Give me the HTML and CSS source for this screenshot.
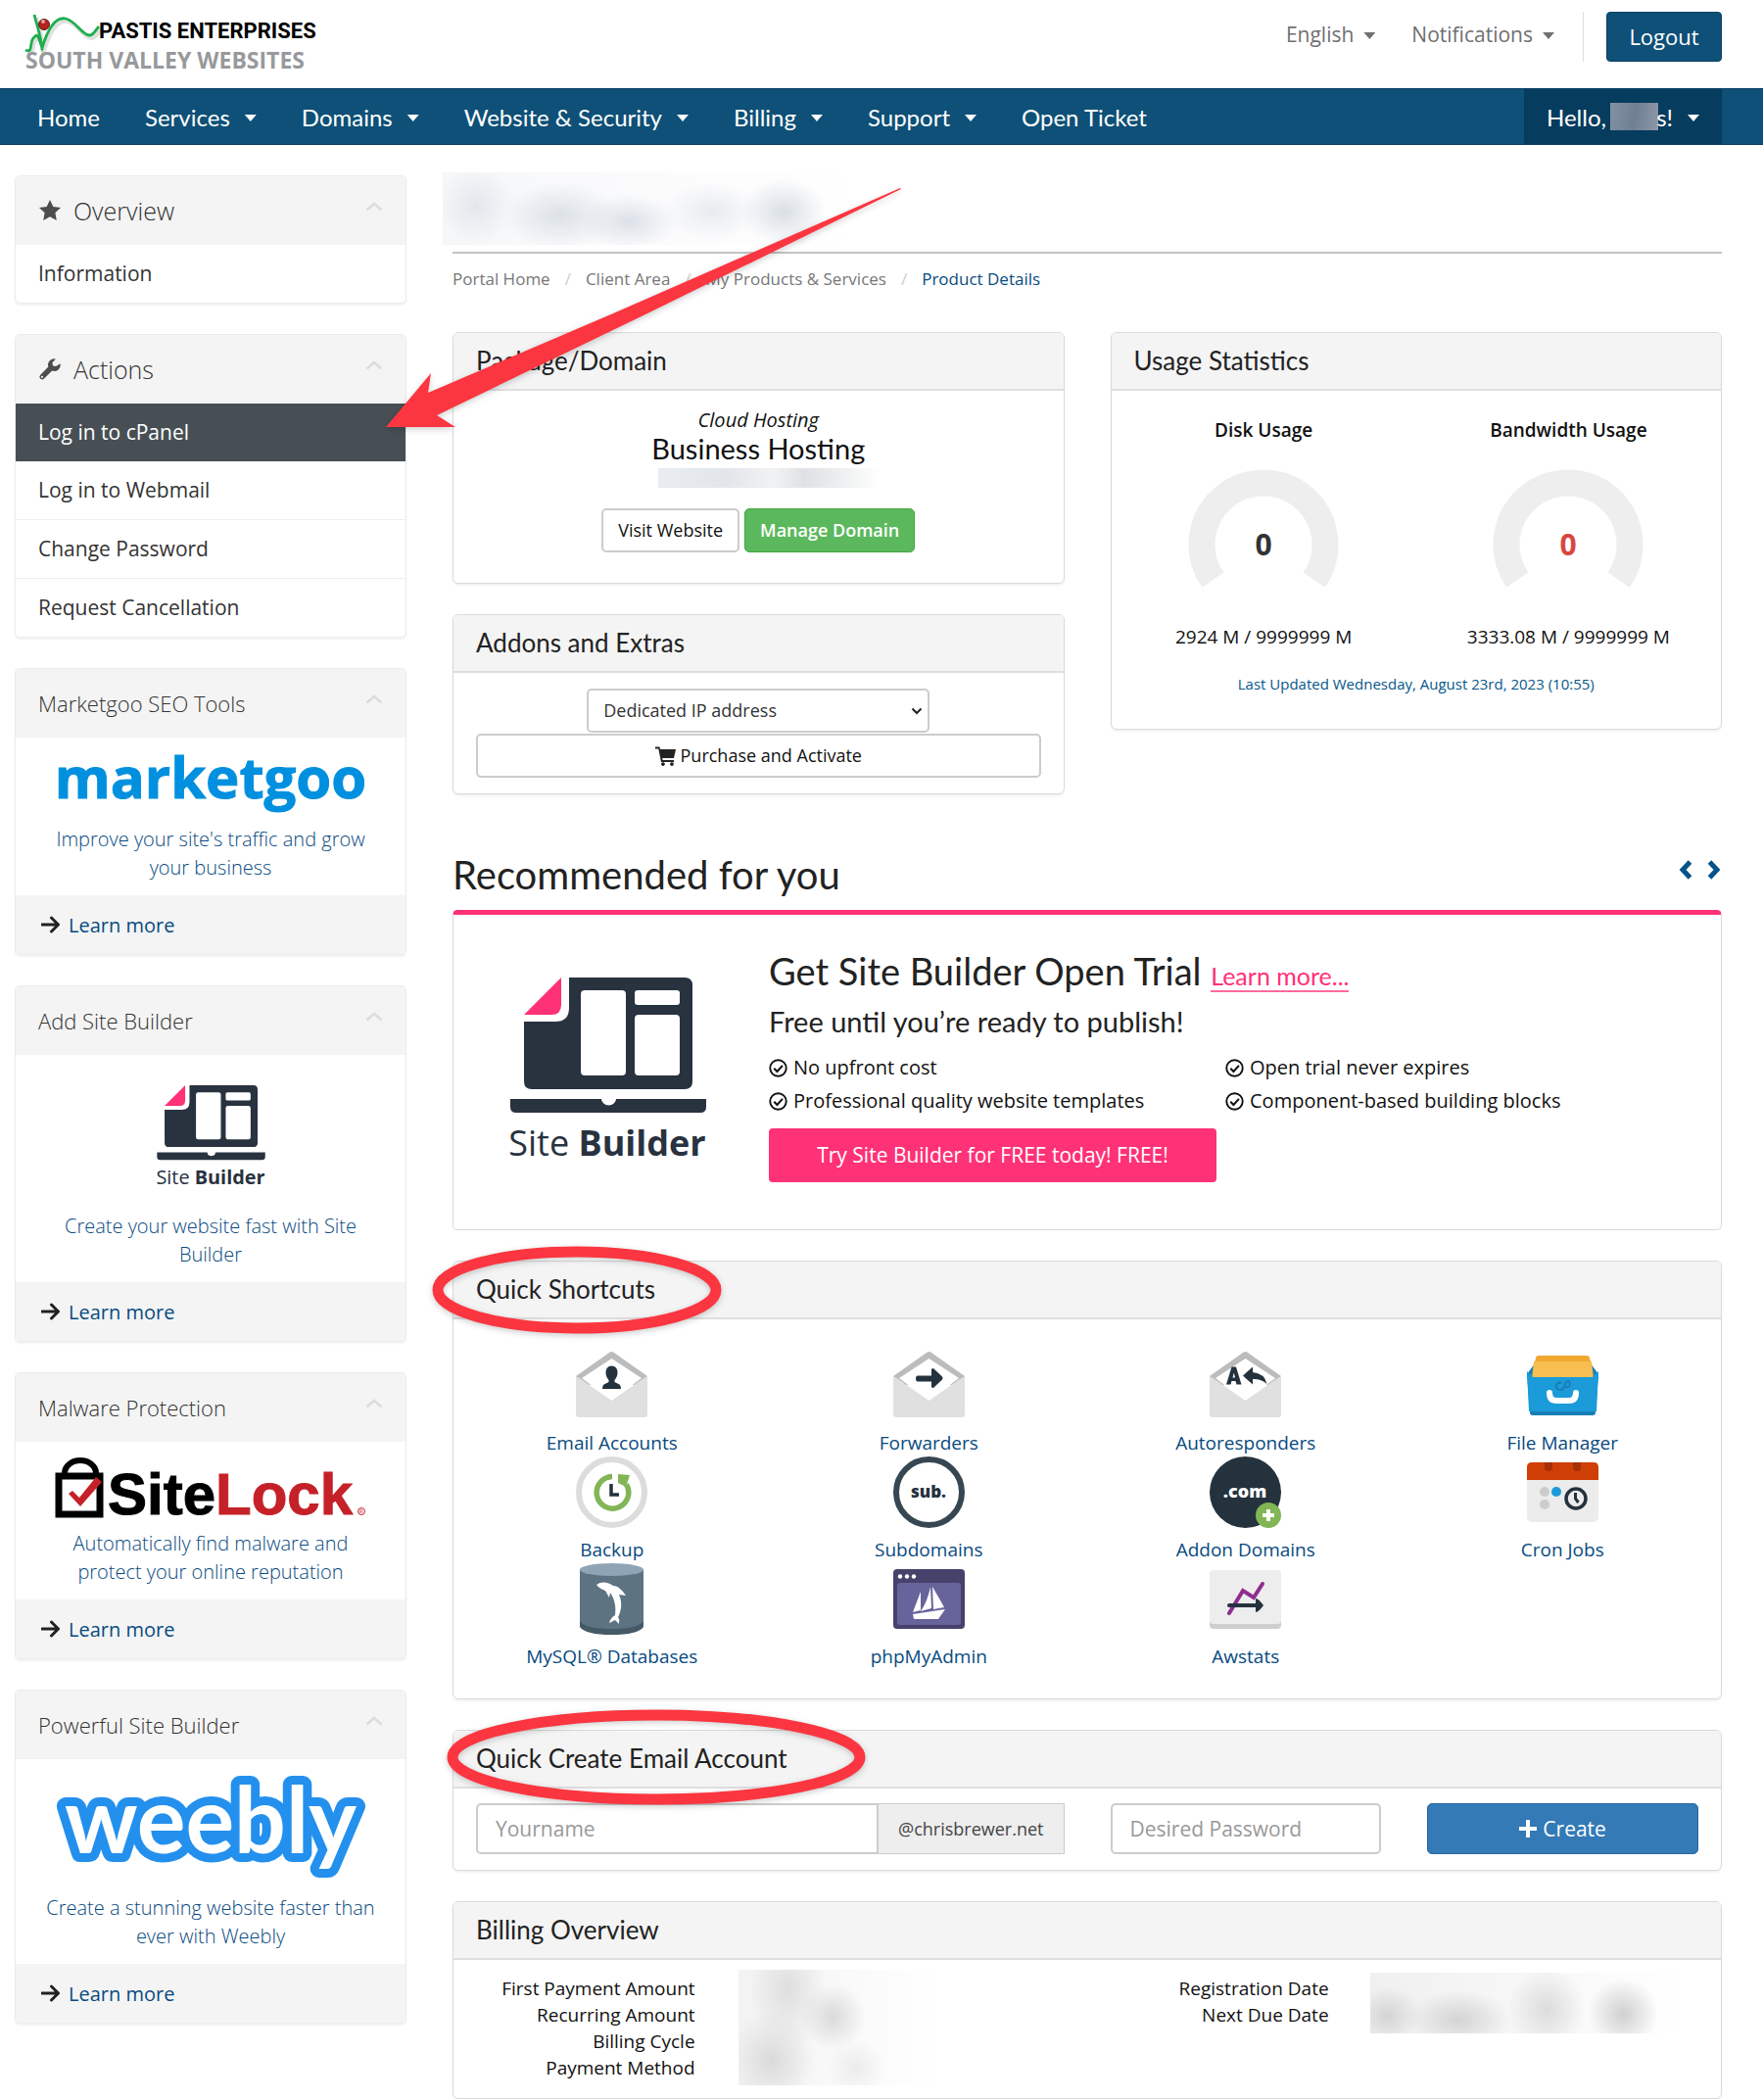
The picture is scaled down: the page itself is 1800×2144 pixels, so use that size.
FILE: index.html
```html
<!DOCTYPE html>
<html lang="en">
<head>
<meta charset="utf-8">
<title>Product Details - South Valley Websites</title>
<meta name="viewport" content="width=device-width, initial-scale=1">
<link rel="stylesheet" href="styles.css">
</head>
<body>
<svg class="defs" aria-hidden="true">
  <symbol id="chev-up" viewBox="0 0 18 10"><path d="M1.500 8.500 9 2l7.500 6.500" fill="none" stroke="#dcdcdc" stroke-width="2.500"/></symbol>
  <symbol id="arrow" viewBox="0 0 20 18"><path d="M1 9h16M10.500 2l7 7-7 7" fill="none" stroke="#222" stroke-width="3" stroke-linecap="round" stroke-linejoin="round"/></symbol>
  <symbol id="tick" viewBox="0 0 18 18"><circle cx="9" cy="9" r="7.800" fill="none" stroke="#111" stroke-width="1.800"/><path d="M5 9.200l3 3 5.200-5.700" fill="none" stroke="#111" stroke-width="2"/></symbol>
  <symbol id="envelope" viewBox="0 0 73 73">
    <path d="M0 31V27L34 3q2.500-2 5 0L73 27v4l-8 5H8z" fill="#bcbcbc"/>
    <path d="M36.500 9 67 29 36.500 52 6 29z" fill="#fff"/>
    <path d="M0 27l5 3 31.500 22L68 30l5-3v39q0 3-3 3H3q-3 0-3-3z" fill="#e0e0e0"/>
  </symbol>
  <symbol id="laptop" viewBox="0 0 210 192">
    <path d="M66 2h118q8 0 8 8v98q0 8-8 8H28q-8 0-8-8V47h32q14 0 14-14z" fill="#29323f"/>
    <path d="M20 40 58 2v28q0 10-10 10z" fill="#ff3177"/>
    <rect x="78" y="15" width="46" height="87" rx="4" fill="#fff"/>
    <rect x="133" y="15" width="46" height="15" rx="3" fill="#fff"/>
    <rect x="133" y="40" width="46" height="62" rx="4" fill="#fff"/>
    <path d="M6 126h93a7.500 6.500 0 0 0 15 0h92v8q0 6-6 6H12q-6 0-6-6z" fill="#29323f"/>
  </symbol>
</svg>

<header class="top">
  <a class="brand" href="#" aria-label="Pastis Enterprises South Valley Websites">
    <svg class="brand-svg" viewBox="0 0 300 74">
      <path d="M10 6C13 18 17 28 18 42M1 42c8 4 4-8 8-12s4-6 9 10C24 20 32 8 42 10s16 16 24 17c5 0 6-5 10-9" transform="translate(2 4)" fill="none" stroke="#999" stroke-width="4" opacity=".3"/>
      <path d="M10 6C13 18 17 28 18 42M1 42c8 4 4-8 8-12s4-6 9 10C24 20 32 8 42 10s16 16 24 17c5 0 6-5 10-9" transform="translate(0 1)" fill="none" stroke="#1fae4f" stroke-width="2.800"/>
      <circle cx="20" cy="17" r="5.500" fill="#b5221f" stroke="#5a2420"/>
      <circle cx="19" cy="14" r="2" fill="#e9a09b"/>
      <text class="brand-one" x="76" y="31">PASTIS ENTERPRISES</text>
      <text class="brand-two" x="1" y="62">SOUTH VALLEY WEBSITES</text>
    </svg>
  </a>
  <div class="top-links">
    <a href="#">English<span class="caret"></span></a>
    <a href="#">Notifications<span class="caret"></span></a>
    <div class="logout-box"><button class="logout" type="button">Logout</button></div>
  </div>
</header>

<nav class="nav">
  <a href="#">Home</a>
  <a href="#">Services<span class="caret"></span></a>
  <a href="#">Domains<span class="caret"></span></a>
  <a href="#">Website &amp; Security<span class="caret"></span></a>
  <a href="#">Billing<span class="caret"></span></a>
  <a href="#">Support<span class="caret"></span></a>
  <a href="#">Open Ticket</a>
  <a class="account" href="#">Hello, <span class="redact-name"></span>s!<span class="caret"></span></a>
</nav>

<div class="page">
  <aside class="side">
    <section class="card">
      <h3 class="card-head big"><svg class="head-icon" viewBox="0 0 24 24"><path d="M12 1l3.300 7 7.700 1-5.600 5.300 1.400 7.700L12 18.300 5.200 22l1.400-7.700L1 9l7.700-1z" fill="#4d4d4d"/></svg>Overview<svg class="chev"><use href="#chev-up"/></svg></h3>
      <a class="item" href="#">Information</a>
    </section>
    <section class="card">
      <h3 class="card-head big"><svg class="head-icon" viewBox="0 0 24 24"><path d="M22.500 6.300a6.300 6.300 0 0 1-8.300 7.300l-8.400 8.200a2.700 2.700 0 0 1-3.800-3.800l8.300-8.400a6.300 6.300 0 0 1 7.600-8l-3.500 3.600.6 3.200 3.200.6z" fill="#4d4d4d"/><circle cx="4" cy="19.800" r="1.100" fill="#f4f4f4"/></svg>Actions<svg class="chev"><use href="#chev-up"/></svg></h3>
      <a class="item active" href="#">Log in to cPanel</a>
      <a class="item" href="#">Log in to Webmail</a>
      <a class="item" href="#">Change Password</a>
      <a class="item" href="#">Request Cancellation</a>
    </section>
    <section class="card">
      <h3 class="card-head">Marketgoo SEO Tools<svg class="chev"><use href="#chev-up"/></svg></h3>
      <a class="promo" href="#"><svg class="logo-short" viewBox="8 0 344 62" role="img" aria-label="marketgoo"><text class="mg-text" x="180" y="46" text-anchor="middle">marketgoo</text></svg>Improve your site's traffic and grow your business</a>
      <div class="card-foot"><svg class="arrow"><use href="#arrow"/></svg><a href="#">Learn more</a></div>
    </section>
    <section class="card">
      <h3 class="card-head">Add Site Builder<svg class="chev"><use href="#chev-up"/></svg></h3>
      <a class="promo" href="#"><svg class="logo-sb" viewBox="0 0 210 192"><use href="#laptop" width="210" height="192"/><text class="sb-text" x="105" y="184" text-anchor="middle">Site <tspan class="sb-strong">Builder</tspan></text></svg>Create your website fast with Site Builder</a>
      <div class="card-foot"><svg class="arrow"><use href="#arrow"/></svg><a href="#">Learn more</a></div>
    </section>
    <section class="card">
      <h3 class="card-head">Malware Protection<svg class="chev"><use href="#chev-up"/></svg></h3>
      <a class="promo" href="#"><svg class="logo-short" viewBox="8 0 344 62">
        <path d="M31 18v-2a16 13 0 0 1 32 0v2" fill="none" stroke="#000" stroke-width="6"/>
        <rect x="25" y="19" width="42" height="39" fill="#fff" stroke="#000" stroke-width="7"/>
        <path d="M35 37l4-3 7 7 17-21 6 5-22 25z" fill="#c52128"/>
        <text class="sl-text" x="75" y="58">Site<tspan class="sl-red">Lock</tspan></text>
        <circle cx="334" cy="55" r="3.500" fill="none" stroke="#c52128"/><text class="sl-reg" x="332" y="57">R</text>
      </svg>Automatically find malware and protect your online reputation</a>
      <div class="card-foot"><svg class="arrow"><use href="#arrow"/></svg><a href="#">Learn more</a></div>
    </section>
    <section class="card">
      <h3 class="card-head">Powerful Site Builder<svg class="chev"><use href="#chev-up"/></svg></h3>
      <a class="promo" href="#"><svg class="logo-tall" viewBox="8 0 344 110"><text class="wb-text" x="180" y="80" text-anchor="middle">weebly</text></svg>Create a stunning website faster than ever with Weebly</a>
      <div class="card-foot"><svg class="arrow"><use href="#arrow"/></svg><a href="#">Learn more</a></div>
    </section>
  </aside>

  <main class="main">
    <div class="title"><div class="redact-title"></div></div>
    <ol class="crumbs">
      <li><a href="#">Portal Home</a></li>
      <li><a href="#">Client Area</a></li>
      <li><a href="#">My Products &amp; Services</a></li>
      <li class="current">Product Details</li>
    </ol>

    <div class="two">
      <div class="stack">
        <section class="panel">
          <h3 class="panel-head">Package/Domain</h3>
          <div class="package">
            <em>Cloud Hosting</em>
            <h4>Business Hosting</h4>
            <div class="redact-domain"></div>
            <div class="buttons">
              <button class="btn" type="button">Visit Website</button>
              <button class="btn green" type="button">Manage Domain</button>
            </div>
          </div>
        </section>
        <section class="panel">
          <h3 class="panel-head">Addons and Extras</h3>
          <form class="addons">
            <div class="select-wrap">
              <select class="select" aria-label="Addon"><option>Dedicated IP address</option></select>
              <svg class="select-chev" viewBox="0 0 12 8"><path d="M1.500 1.500 6 6l4.500-4.500" fill="none" stroke="#222" stroke-width="2"/></svg>
            </div>
            <button class="btn wide" type="button"><svg class="cart" viewBox="0 0 22 20"><path d="M0 .5h4.500l.6 2.500H21l-2 9H7.200l.4 2H19v2H6L3.300 2.500H0zM8 16.200a1.900 1.900 0 1 1-.1 0zM17 16.200a1.900 1.900 0 1 1-.1 0z" fill="#222"/></svg>Purchase and Activate</button>
          </form>
        </section>
      </div>
      <section class="panel usage">
        <h3 class="panel-head">Usage Statistics</h3>
        <div class="usage-body">
          <div class="meters">
            <div class="meter">
              <strong>Disk Usage</strong>
              <svg class="gauge" viewBox="0 0 154 154"><path d="M25.400 113.100A63 63 0 1 1 128.600 113.100" fill="none" stroke="#eee" stroke-width="27"/><text class="gauge-num" x="77" y="88" text-anchor="middle">0</text></svg>
              <span>2924 M / 9999999 M</span>
            </div>
            <div class="meter">
              <strong>Bandwidth Usage</strong>
              <svg class="gauge" viewBox="0 0 154 154"><path d="M25.400 113.100A63 63 0 1 1 128.600 113.100" fill="none" stroke="#eee" stroke-width="27"/><text class="gauge-num red" x="77" y="88" text-anchor="middle">0</text></svg>
              <span>3333.08 M / 9999999 M</span>
            </div>
          </div>
          <p class="updated">Last Updated Wednesday, August 23rd, 2023 (10:55)</p>
        </div>
      </section>
    </div>

    <div class="rec-head">
      <h2>Recommended for you</h2>
      <div class="pager">
        <button type="button" aria-label="Previous"><svg viewBox="0 0 16 20"><path d="M12.500 2 5 10l7.500 8" fill="none" stroke="#06528a" stroke-width="5"/></svg></button>
        <button type="button" aria-label="Next"><svg viewBox="0 0 16 20"><path d="M3.500 2 11 10l-7.500 8" fill="none" stroke="#06528a" stroke-width="5"/></svg></button>
      </div>
    </div>
    <section class="rec">
      <svg class="rec-logo" viewBox="0 0 210 192"><use href="#laptop" width="210" height="192"/><text class="sb-text" x="105" y="184" text-anchor="middle">Site <tspan class="sb-strong">Builder</tspan></text></svg>
      <div class="rec-body">
        <h3>Get Site Builder Open Trial <a href="#">Learn more...</a></h3>
        <h4>Free until you’re ready to publish!</h4>
        <ul>
          <li><svg class="tick"><use href="#tick"/></svg>No upfront cost</li>
          <li><svg class="tick"><use href="#tick"/></svg>Open trial never expires</li>
          <li><svg class="tick"><use href="#tick"/></svg>Professional quality website templates</li>
          <li><svg class="tick"><use href="#tick"/></svg>Component-based building blocks</li>
        </ul>
        <button class="try" type="button">Try Site Builder for FREE today! FREE!</button>
      </div>
    </section>

    <section class="panel marked">
      <h3 class="panel-head">Quick Shortcuts</h3>
      <svg class="ring ring-shortcuts" viewBox="0 0 296 90"><ellipse cx="148" cy="45" rx="142" ry="39" fill="none" stroke="#fb3640" stroke-width="11"/></svg>
      <div class="shortcuts">
        <a href="#"><svg viewBox="0 0 73 73"><use href="#envelope"/><path d="M36.500 16.500c4 0 6 3 6 7 0 3-1.500 5.500-3 7.500v2l5 2.500q1.500 1 1.500 4.500H27q0-3.500 1.500-4.500l5-2.500v-2c-1.500-2-3-4.500-3-7.500 0-4 2-7 6-7z" fill="#24323d"/></svg>Email Accounts</a>
        <a href="#"><svg viewBox="0 0 73 73"><use href="#envelope"/><path d="M25 26.500h14V20q1.500-2 3 0l7.500 7q2 2 0 4L42 38q-1.500 2-3 0v-5.500H25q-2 0-2-3t2-3z" fill="#24323d"/></svg>Forwarders</a>
        <a href="#"><svg viewBox="0 0 73 73"><use href="#envelope"/><path d="M17 35.500l5.500-18h4.500l5.500 18h-5l-1-3.500h-4l-1 3.500zM23.500 28.500h2.500l-1.200-5z" fill="#24323d" fill-rule="evenodd"/><path d="M34 26.500l10-9V23q12 1 14.500 12-6-5.500-14.500-5v5.500z" fill="#24323d"/></svg>Autoresponders</a>
        <a href="#"><svg viewBox="0 0 73 73"><path d="M0 25 8 14h57l8 11-3 39q0 3-3 3H6q-3 0-3-3z" fill="#177fb4"/><path d="M9 9q0-3 3-3h49q3 0 3 3l3 8H6z" fill="#f0a830"/><path d="M7 12h59l2 17H5z" fill="#f8be52"/><path d="M0 22q6 5 6 6h61q0-1 6-6l-2 41H2z" fill="#1b9bd9"/><path d="M23 44q0 8 7 8h13q7 0 7-8" fill="none" stroke="#fff" stroke-width="6" stroke-linecap="round"/><path d="M35.500 34.500a3.500 3.500 0 1 0 0 5.500M36 42l4-9q4-2 4 2t-5 3" fill="none" stroke="#177fb4" stroke-width="2"/></svg>File Manager</a>
        <a href="#"><svg viewBox="0 0 73 73"><circle cx="36.500" cy="36.500" r="33.500" fill="#fff" stroke="#dcdcdc" stroke-width="6"/><path d="M37 20.500a16.300 16.300 0 1 0 14.500 8" fill="none" stroke="#82b555" stroke-width="5.500"/><path d="M43 18l12 1-4 12-8-4z" fill="#82b555"/><path d="M36 28v11h8" fill="none" stroke="#24323d" stroke-width="3.500"/></svg>Backup</a>
        <a href="#"><svg viewBox="0 0 73 73"><circle cx="36.500" cy="36.500" r="33.500" fill="#fff" stroke="#374752" stroke-width="6"/><text class="icon-sub" x="36" y="42" text-anchor="middle">sub.</text></svg>Subdomains</a>
        <a href="#"><svg viewBox="0 0 73 73"><circle cx="36.500" cy="36.500" r="36.500" fill="#24323d"/><text class="icon-com" x="36" y="42" text-anchor="middle">.com</text><circle cx="60" cy="60" r="13" fill="#82b555"/><path d="M60 54v12M54 60h12" stroke="#fff" stroke-width="4"/></svg>Addon Domains</a>
        <a href="#"><svg viewBox="0 0 73 73"><rect y="7" width="73" height="60" rx="5" fill="#ececec"/><path d="M0 24V11q0-5 5-5h63q5 0 5 5v13z" fill="#cf3e04"/><path d="M18 6h8v5q0 4-4 4t-4-4zM47 6h8v5q0 4-4 4t-4-4z" fill="#a52f06"/><g fill="#ccc"><circle cx="18" cy="36" r="5"/><circle cx="18" cy="49" r="5"/></g><circle cx="30" cy="36" r="5" fill="#1b9bd9"/><circle cx="50" cy="43" r="10" fill="none" stroke="#24323d" stroke-width="3.500"/><path d="M49.500 37v6l3 4" fill="none" stroke="#24323d" stroke-width="3"/></svg>Cron Jobs</a>
        <a href="#"><svg viewBox="0 0 73 73"><path d="M4 6h65v59q-6 8-32.500 8T4 65z" fill="#465966"/><path d="M4 6h65v53q-6 8-32.500 8T4 59z" fill="#5e7382"/><ellipse cx="36.500" cy="6.500" rx="32.500" ry="6.500" fill="#8fa5b5"/><path d="M21 22c5-4 12-3 17 1 5 0 10 5 13 10l-7-1c4 9 2 17-1 23 2 3 1 4 1 7l-4-4-6 3c1-4 3-6 6-8 1-8 0-16-5-23l-1 5-4-7c-3-1-7-3-9-6z" fill="#fff"/></svg>MySQL® Databases</a>
        <a href="#"><svg viewBox="0 0 73 73"><rect y="6" width="73" height="61" rx="4" fill="#46426b"/><rect x="4" y="20" width="65" height="43" rx="3" fill="#66649a"/><g fill="#fff"><circle cx="7" cy="13.500" r="2.200"/><circle cx="14" cy="13.500" r="2.200"/><circle cx="21" cy="13.500" r="2.200"/><path d="M28 29v19l-8 2zM38 24l1 22-11 3q7-10 10-25zM40 24q6 10 12 21l-11 2zM20 52l33-5-7 10H21z"/></g></svg>phpMyAdmin</a>
        <a href="#"><svg viewBox="0 0 73 73"><rect y="8" width="73" height="59" rx="4" fill="#cfcfcf"/><rect y="7" width="73" height="55" rx="4" fill="#ededed"/><path d="M20 51l14-23 11 7 9-14" fill="none" stroke="#8f2d90" stroke-width="4" stroke-linecap="round"/><path d="M20 43h28" stroke="#24323d" stroke-width="4" stroke-linecap="round"/><path d="M47 36q3 0 8 7-5 7-8 7z" fill="#24323d"/></svg>Awstats</a>
      </div>
    </section>

    <section class="panel marked">
      <h3 class="panel-head">Quick Create Email Account</h3>
      <svg class="ring ring-email" viewBox="0 0 429 98"><ellipse cx="214" cy="49" rx="208" ry="43" fill="none" stroke="#fb3640" stroke-width="11"/></svg>
      <form class="email">
        <div class="group"><input class="field" type="text" placeholder="Yourname" aria-label="Yourname"><span class="suffix">@chrisbrewer.net</span></div>
        <input class="field" type="password" placeholder="Desired Password" aria-label="Desired Password">
        <button class="create" type="button"><svg class="plus" viewBox="0 0 18 18"><path d="M9 0v18M0 9h18" stroke="#fff" stroke-width="4"/></svg>Create</button>
      </form>
    </section>

    <section class="panel last">
      <h3 class="panel-head">Billing Overview</h3>
      <div class="billing">
        <div class="bill-half">
          <div class="bill-labels"><div>First Payment Amount</div><div>Recurring Amount</div><div>Billing Cycle</div><div>Payment Method</div></div>
          <div class="redact-amounts"></div>
        </div>
        <div class="bill-half">
          <div class="bill-labels"><div>Registration Date</div><div>Next Due Date</div></div>
          <div class="redact-dates"></div>
        </div>
      </div>
    </section>
  </main>
</div>

<svg class="pointer" viewBox="0 0 530 250" aria-hidden="true"><path d="M2 246 48 191l-3 20 189-81L527 2l1 1L269 130 54 234l19 12z" fill="#fb3640"/></svg>
</body>
</html>
```

FILE: styles.css
```css
* { box-sizing: border-box; }

body {
  margin: 0;
  position: relative;
  background: #fff;
  color: #111;
  font-family: "Open Sans", "Liberation Sans", sans-serif;
  font-size: 19px;
  line-height: 27px;
  overflow-x: hidden;
}

h2, h3, h4, p, ul, ol { margin: 0; padding: 0; font-weight: 400; }
ul, ol { list-style: none; }
a { color: #084a80; text-decoration: none; }
button, input, select { font: inherit; color: inherit; margin: 0; }
button { cursor: pointer; }
svg { display: block; flex: none; overflow: visible; }
.defs { position: absolute; width: 0; height: 0; }

.caret {
  display: inline-block;
  width: 12px;
  height: 7px;
  margin-left: 10px;
  background: currentColor;
  clip-path: polygon(0 0, 100% 0, 50% 100%);
}

/* Header */
.top {
  display: flex;
  justify-content: space-between;
  align-items: flex-start;
  height: 90px;
  padding: 8px 42px 0 25px;
}
.brand-svg { width: 300px; height: 74px; }
.brand-one { font: 700 22px Roboto, "Open Sans", sans-serif; fill: #000; }
.brand-two { font: 700 23px "Open Sans", sans-serif; fill: #97999c; }
.top-links { display: flex; gap: 37px; padding-top: 4px; }
.top-links > a { display: flex; align-items: center; height: 50px; color: #707070; font-size: 21px; padding-bottom: 4px; }
.top-links .caret { margin-top: 3px; }
.logout-box { display: flex; margin-left: -8px; padding-left: 23px; border-left: 1px solid #ddd; height: 51px; }
.logout {
  width: 118px;
  border: 1px solid #0a3f66;
  border-radius: 4px;
  background: #0e5077;
  color: #fff;
  font-size: 22px;
}

/* Navigation */
.nav {
  display: flex;
  height: 58px;
  padding: 0 42px 0 15px;
  background: #0e5077;
  border-top: 1px solid #0b3f66;
  border-bottom: 1px solid #0a3a66;
  font-family: Lato, "Open Sans", sans-serif;
  font-size: 24px;
}
.nav a { display: flex; align-items: center; padding: 0 23px; color: #fff; white-space: pre; }
.nav .caret { margin-left: 15px; margin-top: 3px; }
.nav .account { margin-left: auto; background: #063c5e; }
.redact-name { width: 49px; height: 28px; margin: 0 -2px; background: linear-gradient(100deg, #8292a3, #6f8093 50%, #8e98a6); }

/* Columns */
.page {
  display: grid;
  grid-template-columns: 400px minmax(0, 1fr);
  gap: 47px;
  align-items: start;
  padding: 28px 42px 0 15px;
}

/* Sidebar */
.side { display: grid; gap: 31px; padding-top: 3px; }
.card {
  border: 1px solid #ececec;
  border-radius: 5px;
  box-shadow: 0 2px 2px rgba(0, 0, 0, .05);
  background: #fff;
}
.card-head {
  display: flex;
  align-items: center;
  height: 70px;
  padding: 0 23px;
  background: #f4f4f4;
  color: #333;
  font-size: 22px;
  font-weight: 300;
}
.card-head.big { font-size: 25px; }
.head-icon { width: 24px; height: 24px; margin-right: 12px; }
.chev { width: 18px; height: 10px; margin: 0 0 8px auto; }
.item {
  display: block;
  height: 60px;
  padding: 0 23px;
  line-height: 59px;
  font-size: 21px;
  color: #333;
  border-bottom: 1px solid #eee;
}
.item:last-child, .item.active { height: 59px; border-bottom: 0; }
.item.active { background: #474f54; color: #fff; }
.promo {
  display: block;
  padding: 16px 26px 14px;
  text-align: center;
  font-size: 20px;
  font-weight: 300;
  line-height: 29px;
}
.promo svg { margin: 0 auto 11px; }
.logo-short { width: 344px; height: 62px; }
.logo-tall { width: 344px; height: 110px; }
.promo .logo-sb { width: 118px; height: 106px; margin: 14px auto 24px; }
.sb-text { font: 400 36px "Open Sans", sans-serif; fill: #29323f; }
.sb-strong { font-weight: 700; }
.mg-text { font: 700 58px "Open Sans", sans-serif; fill: #0090df; stroke: #0090df; stroke-width: 1px; }
.sl-text { font: 700 60px "Liberation Sans", sans-serif; fill: #000; stroke: #000; stroke-width: 1px; }
.sl-red { fill: #c52128; stroke: #c52128; }
.sl-reg { font: 400 5px "Liberation Sans", sans-serif; fill: #c52128; }
.wb-text {
  font: 700 93px Lato, sans-serif;
  fill: #fff;
  stroke: #2490ee;
  stroke-width: 18px;
  stroke-linejoin: round;
  stroke-linecap: round;
  paint-order: stroke;
}
.card-foot {
  display: flex;
  align-items: center;
  gap: 8px;
  height: 60px;
  padding: 0 26px;
  background: #f4f4f4;
  font-size: 20px;
}
.arrow { width: 20px; height: 18px; }

/* Title and breadcrumb */
.title { height: 83px; border-bottom: 2px solid #c4c4c4; }
.redact-title {
  width: 470px;
  height: 74px;
  margin-left: -10px;
  background:
    radial-gradient(ellipse 40px 40px at 34px 34px, #e3e7ec, transparent),
    radial-gradient(ellipse 60px 34px at 120px 44px, #dce1e7, transparent),
    radial-gradient(ellipse 50px 28px at 190px 50px, #dce1e8, transparent),
    radial-gradient(ellipse 50px 30px at 275px 40px, #e8ebef, transparent),
    radial-gradient(ellipse 44px 34px at 348px 40px, #d9dee5, transparent),
    linear-gradient(90deg, #f6f7f9, #fff 90%);
}
.crumbs { display: flex; padding: 13px 0 42px; font-size: 17px; line-height: 25px; }
.crumbs a { color: #777; }
.crumbs .current { color: #084a80; }
.crumbs li + li::before { content: "/"; color: #ccc; padding: 0 15px; }

/* Panels */
.panel {
  margin-bottom: 31px;
  border: 1px solid #dadada;
  border-radius: 6px;
  box-shadow: 0 2px 2px rgba(0, 0, 0, .05);
  background: #fff;
}
.panel.last { margin-bottom: 0; }
.panel-head {
  height: 59px;
  padding: 0 23px;
  background: #f4f4f4;
  border-bottom: 2px solid #dfdfdf;
  border-radius: 5px 5px 0 0;
  font-family: Lato, "Open Sans", sans-serif;
  font-size: 26px;
  line-height: 57px;
  color: #222;
}
.two { display: grid; grid-template-columns: 1fr 1fr; gap: 47px; align-items: start; }
.package { padding: 16px 23px 31px; text-align: center; }
.package em { display: block; font-size: 20px; }
.package h4 { font-family: Lato, "Open Sans", sans-serif; font-size: 29px; line-height: 32px; }
.redact-domain {
  width: 226px;
  height: 20px;
  margin: 4px auto 21px calc(50% - 102px);
  background: linear-gradient(90deg, #e9ecf0, #e2e5ea 30%, #f1f2f3 52%, #dfe1e4 66%, #eceeef 82%, #fff);
}
.buttons { display: flex; justify-content: center; gap: 5px; }
.btn {
  height: 45px;
  padding: 0 15px;
  border: 2px solid #ccc;
  border-radius: 5px;
  background: #fff;
  font-size: 18px;
}
.btn.green { background: #5cb85c; border: 1px solid #3fa83f; color: #fff; font-weight: 600; }
.btn.wide { display: flex; align-items: center; justify-content: center; gap: 4px; width: 100%; margin-top: 1px; }
.cart { width: 22px; height: 20px; }
.addons { padding: 16px 23px; }
.select-wrap { display: grid; width: 350px; margin: 0 auto; }
.select {
  grid-area: 1 / 1;
  appearance: none;
  height: 45px;
  padding: 0 15px;
  border: 2px solid #ccc;
  border-radius: 5px;
  background: #fff;
  color: #333;
  font-size: 18px;
}
.select-chev { grid-area: 1 / 1; place-self: center end; width: 12px; height: 8px; margin-right: 7px; pointer-events: none; }
.usage-body { padding: 27px 0 32px; text-align: center; }
.meters { display: grid; grid-template-columns: 1fr 1fr; }
.meter strong { font-weight: 600; }
.meter span { display: block; }
.gauge { width: 154px; height: 154px; margin: 26px auto 4px; }
.gauge-num { font: 700 30px "Open Sans", sans-serif; fill: #333; }
.gauge-num.red { fill: #d9463f; }
.updated { margin-top: 21px; color: #06588a; font-size: 15px; }

/* Recommended */
.rec-head { display: flex; justify-content: space-between; margin-top: 26px; padding-bottom: 11px; }
.rec-head h2 { font-family: Lato, "Open Sans", sans-serif; font-size: 40px; line-height: 50px; color: #222; }
.pager { display: flex; gap: 13px; padding: 5px 0 15px; }
.pager button { padding: 0; border: 0; background: none; }
.pager svg { width: 16px; height: 20px; }
.rec {
  display: flex;
  min-height: 327px;
  margin-bottom: 31px;
  padding: 34px 40px 0 52px;
  border: 1px solid #dadada;
  border-top: 5px solid #ff3177;
  border-radius: 5px;
}
.rec-logo { width: 210px; height: 192px; margin: 28px 60px 0 0; }
.rec-body { flex: 1; }
.rec-body h3, .rec-body h4 { font-family: Lato, "Open Sans", sans-serif; color: #222; }
.rec-body h3 { font-size: 38px; line-height: 46px; }
.rec-body h3 a { font-size: 25px; color: #ff3177; border-bottom: 2px solid #ff6a9c; }
.rec-body h4 { font-size: 29px; line-height: 42px; margin: 3px 0 9px; }
.rec-body ul { display: grid; grid-template-columns: 1fr 1fr; }
.rec-body li { display: flex; align-items: center; gap: 6px; font-size: 20px; line-height: 34px; }
.tick { width: 19px; height: 19px; }
.try {
  width: 457px;
  height: 55px;
  margin-top: 11px;
  border: 0;
  border-radius: 4px;
  background: #ff3177;
  color: #fff;
  font-size: 21px;
}

/* Shortcuts */
.marked { position: relative; }
.ring { position: absolute; filter: drop-shadow(0 2px 3px rgba(0, 0, 0, .2)); }
.ring-shortcuts { left: -22px; top: -16px; width: 296px; height: 90px; }
.ring-email { left: -7px; top: -22px; width: 429px; height: 98px; }
.shortcuts { display: grid; grid-template-columns: repeat(4, 1fr); padding: 31px 0 29px; }
.shortcuts a { display: grid; justify-items: center; gap: 9px; }
.shortcuts svg { width: 73px; height: 73px; }
.icon-sub { font: 800 17px "Open Sans", sans-serif; fill: #24323d; }
.icon-com { font: 800 18px "Open Sans", sans-serif; fill: #fff; }

/* Quick email form */
.email { display: grid; grid-template-columns: repeat(12, 1fr); column-gap: 47px; padding: 15px 23px 16px; }
.email > * { grid-column: span 3; }
.email .group { grid-column: span 6; display: flex; }
.field {
  min-width: 0;
  width: 100%;
  height: 52px;
  padding: 0 18px;
  border: 2px solid #ccc;
  border-radius: 5px;
  background: #fff;
  font-size: 21px;
}
.field::placeholder { color: #999; opacity: 1; }
.group .field { flex: 1; border-radius: 5px 0 0 5px; }
.suffix {
  padding: 0 20px;
  border: 1px solid #ccc;
  border-left: 0;
  background: #eee;
  color: #444;
  font-size: 18px;
  line-height: 50px;
}
.create {
  display: flex;
  align-items: center;
  justify-content: center;
  gap: 6px;
  border: 1px solid #2466a0;
  border-radius: 5px;
  background: #337ab7;
  color: #fff;
  font-size: 21px;
}
.plus { width: 18px; height: 18px; }

/* Billing */
.billing { display: grid; grid-template-columns: 1fr 1fr; height: 141px; }
.bill-half { display: grid; grid-template-columns: 5fr 7fr; align-items: start; }
.bill-labels { padding: 16px 23px 0 0; text-align: right; }
.redact-amounts {
  width: 203px;
  height: 118px;
  margin: 10px 0 0 21px;
  background:
    radial-gradient(ellipse 40px 60px at 50px 20px, #dedede, transparent),
    radial-gradient(ellipse 34px 34px at 96px 48px, #dadada, transparent),
    radial-gradient(ellipse 44px 50px at 34px 92px, #dadada, transparent),
    radial-gradient(ellipse 30px 30px at 120px 100px, #ececec, transparent),
    linear-gradient(90deg, #f3f3f3, #fff);
}
.redact-dates {
  width: 320px;
  height: 62px;
  margin: 13px 0 0 19px;
  background:
    radial-gradient(ellipse 34px 30px at 18px 44px, #d4d4d4, transparent),
    radial-gradient(ellipse 54px 30px at 90px 48px, #d4d4d4, transparent),
    radial-gradient(ellipse 40px 44px at 180px 38px, #dcdcdc, transparent),
    radial-gradient(ellipse 36px 36px at 258px 42px, #d0d0d0, transparent),
    linear-gradient(90deg, #f0f0f0, #fff);
}

/* Arrow pointing at the cPanel link */
.pointer {
  position: absolute;
  left: 392px;
  top: 190px;
  width: 530px;
  height: 250px;
  filter: drop-shadow(0 2px 3px rgba(0, 0, 0, .2));
}
```
